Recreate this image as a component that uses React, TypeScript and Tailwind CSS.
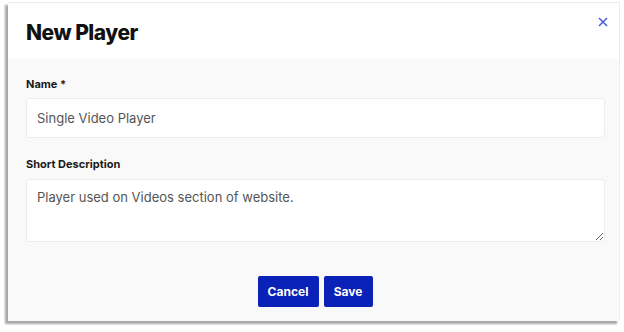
import React from 'react';

const App: React.FC = () => {
  return (
    <div className="w-[624px] h-[332px] bg-white pt-[2px] pl-[8px]" style={{ fontFamily: 'Inter, "Liberation Sans", sans-serif' }}>
      <div className="w-[612px] h-[319px] flex flex-col bg-[#f9f9f9] border-t border-r border-[#ececec] shadow-[-3px_3px_2px_rgba(0,0,0,0.35)]">
        {/* Header */}
        <div className="h-[56px] bg-white flex items-center justify-between pl-[18px] pr-[11px]">
          <h1 className="text-[21px] font-extrabold tracking-[-0.5px] text-[#111] mt-[3px]">New Player</h1>
          <button className="text-[#4f5fd6] mb-[18px]">
            <svg width="10" height="10" viewBox="0 0 10 10" fill="none" stroke="currentColor" strokeWidth="1.6">
              <path d="M1 1l8 8M9 1l-8 8" />
            </svg>
          </button>
        </div>

        {/* Body */}
        <div className="flex flex-col px-[18px] pt-[18px]">
          <label className="text-[11px] font-bold text-[#1a1a1a] leading-[14px]">Name *</label>
          <input
            readOnly
            value="Single Video Player"
            className="mt-[7px] h-[40px] w-[579px] rounded-[3px] border border-[#ececec] bg-white px-[10px] text-[13px] text-[#555] outline-none"
          />
          <label className="mt-[19px] text-[11px] font-bold text-[#1a1a1a] leading-[14px]">Short Description</label>
          <textarea
            readOnly
            value="Player used on Videos section of website."
            className="mt-[8px] h-[63px] w-[579px] rounded-[3px] border border-[#ececec] bg-white px-[10px] py-[8px] text-[13px] text-[#555] outline-none resize-y"
          />
          <div className="flex justify-center gap-[5px] mt-[34px] pl-[3px]">
            <button className="h-[31px] w-[61px] rounded-[2px] bg-[#0a22b8] text-white text-[12px] font-bold">Cancel</button>
            <button className="h-[31px] w-[49px] rounded-[2px] bg-[#0a22b8] text-white text-[12px] font-bold">Save</button>
          </div>
        </div>
      </div>
    </div>
  );
};

export default App;
